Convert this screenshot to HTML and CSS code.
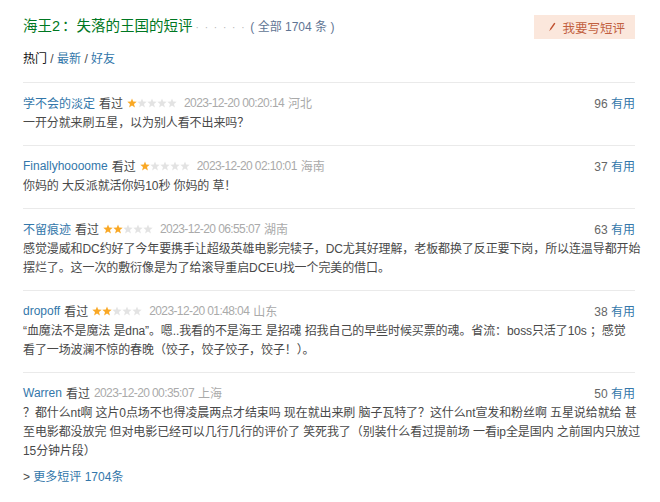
FILE: index.html
```html
<!DOCTYPE html>
<html lang="zh-CN">
<head>
<meta charset="utf-8">
<title>海王2：失落的王国的短评</title>
<link rel="stylesheet" href="styles.css">
</head>
<body>
<svg width="0" height="0" class="defs">
  <defs>
    <symbol id="star" viewBox="0 0 10 10">
      <polygon points="5,0.4 6.2,3.6 9.7,3.7 7,5.9 7.9,9.4 5,7.4 2.1,9.4 3,5.9 0.3,3.7 3.8,3.6"/>
    </symbol>
  </defs>
</svg>
<div class="page">
  <div class="head">
    <h2 class="title">海王2<span class="colon">：</span>失落的王国的短评<span class="dots">······</span><span class="total">( 全部 1704 条 )</span></h2>
    <a class="write-btn"><svg class="pen" width="8" height="10" viewBox="0 0 8 10"><path d="M1.2 9.2 L2.4 6.2 L6.2 0.8 L7.4 1.6 L3.6 7 Z"/></svg>我要写短评</a>
  </div>
  <div class="tabs">
    <span class="tab-on">热门</span><span class="sep"> / </span><a class="tab">最新</a><span class="sep"> / </span><a class="tab">好友</a>
  </div>

  <div class="comment">
    <div class="meta">
      <div class="info">
        <a class="user">学不会的淡定</a>
        <span class="seen">看过</span>
        <span class="stars"><svg class="on"><use href="#star"/></svg><svg><use href="#star"/></svg><svg><use href="#star"/></svg><svg><use href="#star"/></svg><svg><use href="#star"/></svg></span>
        <span class="time">2023-12-20 00:20:14</span>
        <span class="loc">河北</span>
      </div>
      <div class="votes"><span class="num">96</span> <a class="useful">有用</a></div>
    </div>
    <p class="text">一开分就来刷五星，以为别人看不出来吗？</p>
  </div>

  <div class="comment">
    <div class="meta">
      <div class="info">
        <a class="user">Finallyhoooome</a>
        <span class="seen">看过</span>
        <span class="stars"><svg class="on"><use href="#star"/></svg><svg><use href="#star"/></svg><svg><use href="#star"/></svg><svg><use href="#star"/></svg><svg><use href="#star"/></svg></span>
        <span class="time">2023-12-20 02:10:01</span>
        <span class="loc">海南</span>
      </div>
      <div class="votes"><span class="num">37</span> <a class="useful">有用</a></div>
    </div>
    <p class="text">你妈的 大反派就活你妈10秒 你妈的 草！</p>
  </div>

  <div class="comment">
    <div class="meta">
      <div class="info">
        <a class="user">不留痕迹</a>
        <span class="seen">看过</span>
        <span class="stars"><svg class="on"><use href="#star"/></svg><svg class="on"><use href="#star"/></svg><svg><use href="#star"/></svg><svg><use href="#star"/></svg><svg><use href="#star"/></svg></span>
        <span class="time">2023-12-20 06:55:07</span>
        <span class="loc">湖南</span>
      </div>
      <div class="votes"><span class="num">63</span> <a class="useful">有用</a></div>
    </div>
    <p class="text">感觉漫威和DC约好了今年要携手让超级英雄电影完犊子，DC尤其好理解，老板都换了反正要下岗，所以连温导都开始<br>摆烂了。这一次的敷衍像是为了给滚导重启DCEU找一个完美的借口。</p>
  </div>

  <div class="comment">
    <div class="meta">
      <div class="info">
        <a class="user">dropoff</a>
        <span class="seen">看过</span>
        <span class="stars"><svg class="on"><use href="#star"/></svg><svg class="on"><use href="#star"/></svg><svg><use href="#star"/></svg><svg><use href="#star"/></svg><svg><use href="#star"/></svg></span>
        <span class="time">2023-12-20 01:48:04</span>
        <span class="loc">山东</span>
      </div>
      <div class="votes"><span class="num">38</span> <a class="useful">有用</a></div>
    </div>
    <p class="text">“血魔法不是魔法 是dna”。嗯..我看的不是海王 是招魂 招我自己的早些时候买票的魂。省流：boss只活了10s ；感觉<br>看了一场波澜不惊的春晚（饺子，饺子饺子，饺子！）。</p>
  </div>

  <div class="comment last">
    <div class="meta">
      <div class="info">
        <a class="user">Warren</a>
        <span class="seen">看过</span>
        <span class="time">2023-12-20 00:35:07</span>
        <span class="loc">上海</span>
      </div>
      <div class="votes"><span class="num">50</span> <a class="useful">有用</a></div>
    </div>
    <p class="text">？都什么nt啊 这片0点场不也得凌晨两点才结束吗 现在就出来刷 脑子瓦特了？这什么nt宣发和粉丝啊 五星说给就给 甚<br>至电影都没放完 但对电影已经可以几行几行的评价了 笑死我了（别装什么看过提前场 一看ip全是国内 之前国内只放过<br>15分钟片段）</p>
  </div>

  <div class="more"><span class="arrow">&gt;</span> <a class="more-link">更多短评 1704条</a></div>
</div>
</body>
</html>
```
FILE: styles.css
```css
html, body {
  margin: 0;
  padding: 0;
  background: #fff;
}
body {
  font-family: "Liberation Sans", Arial, "Noto Sans CJK SC", sans-serif;
  font-size: 12px;
  color: #494949;
}
.defs {
  position: absolute;
  width: 0;
  height: 0;
}
a {
  text-decoration: none;
  cursor: pointer;
}
.page {
  width: 612px;
  padding: 15px 0 0 23px;
}
.head {
  display: flex;
  justify-content: space-between;
  align-items: center;
  height: 24px;
}
.title {
  margin: 0;
  font-size: 14.5px;
  font-weight: normal;
  color: #072;
  line-height: 20px;
  white-space: nowrap;
}
.colon {
  padding-left: 2px;
}
.dots {
  color: #b5b5b5;
  font-size: 10px;
  letter-spacing: 5.8px;
  margin-left: 3px;
}
.total {
  color: #5f7594;
  font-size: 12px;
}
.write-btn {
  display: flex;
  align-items: center;
  gap: 6px;
  height: 24px;
  padding: 0 10px 0 14px;
  background: #fbe7dc;
  color: #c2603f;
  font-size: 12.5px;
}
.pen {
  fill: #c0502f;
}
.tabs {
  margin: 10px 0 13px;
  line-height: 20px;
  font-size: 12px;
  color: #111;
}
.tabs .sep {
  color: #494949;
}
.tab {
  color: #37a;
}
.comment {
  border-top: 1px solid #eaeaea;
  padding: 9px 0 12px;
}
.comment.last {
  padding-bottom: 0;
}
.meta {
  display: flex;
  justify-content: space-between;
  align-items: center;
  height: 21px;
}
.info {
  display: flex;
  align-items: center;
  gap: 4px;
  white-space: nowrap;
}
.user {
  color: #37a;
}
.seen {
  color: #494949;
}
.stars {
  display: inline-flex;
  margin: 0 3px 0 0;
}
.stars svg {
  width: 10px;
  height: 10px;
  fill: #e3e3e3;
}
.stars svg.on {
  fill: #f9a825;
}
.time {
  color: #aaa;
  letter-spacing: -0.6px;
}
.loc {
  color: #aaa;
}
.votes {
  color: #666;
  white-space: nowrap;
}
.useful {
  color: #37a;
}
.text {
  margin: 1px -6px 0 0;
  line-height: 19px;
  letter-spacing: -0.1px;
  color: #494949;
}
.more {
  margin-top: 6px;
  line-height: 20px;
  color: #494949;
}
.more-link {
  color: #37a;
}
```
